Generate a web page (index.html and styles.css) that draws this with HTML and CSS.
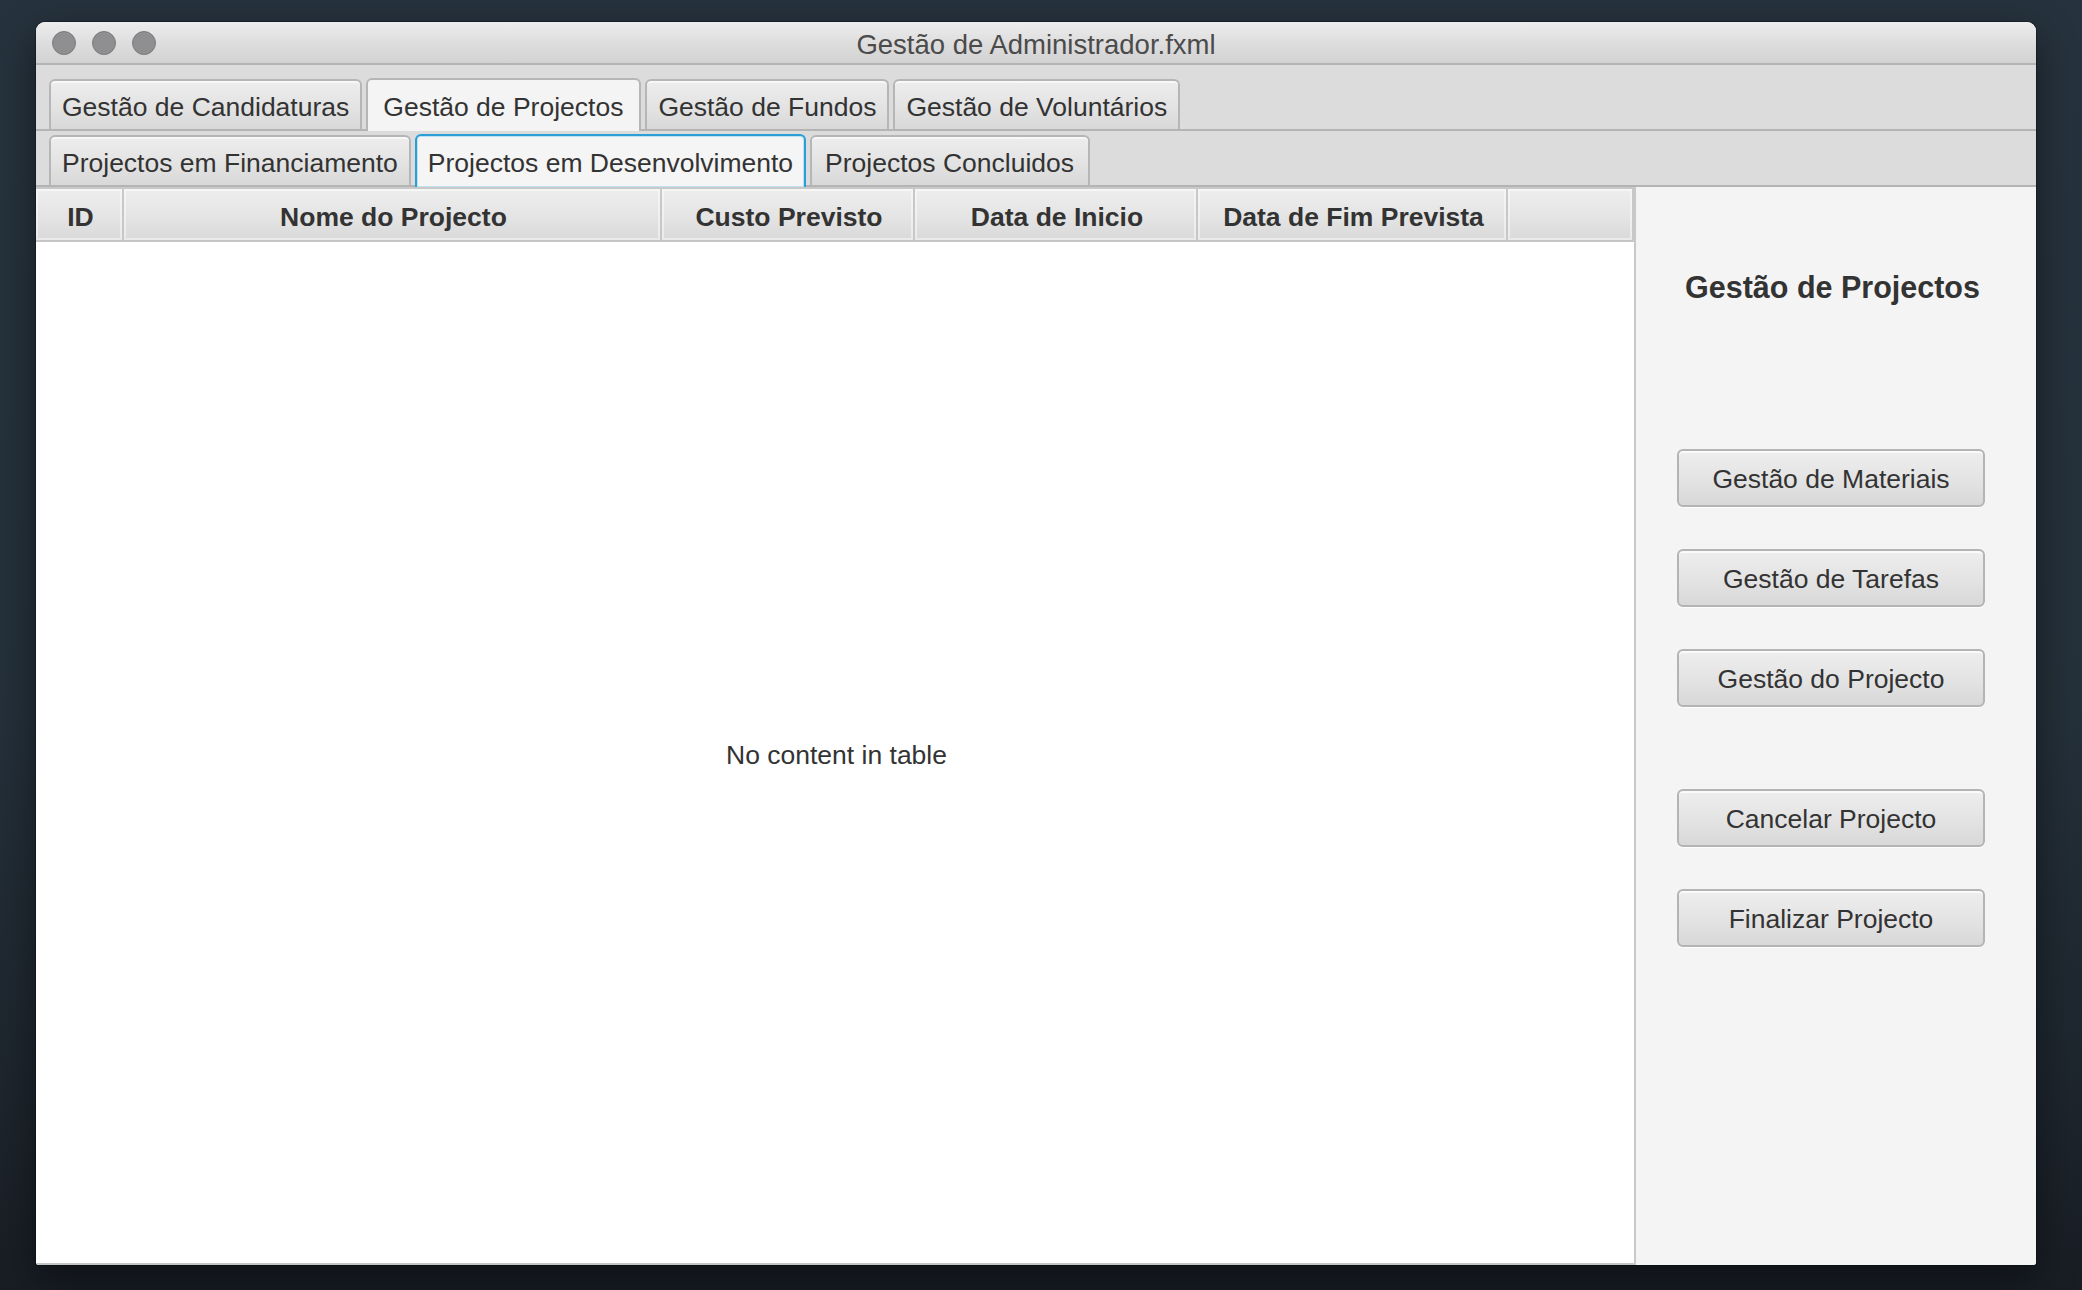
FILE: index.html
```html
<!DOCTYPE html>
<html lang="pt">
<head>
<meta charset="utf-8">
<title>Gestão de Administrador.fxml</title>
<link rel="stylesheet" href="styles.css">
</head>
<body>
<div class="desktop">
  <div class="window">
    <div class="titlebar">
      <div class="lights">
        <span class="light"></span>
        <span class="light"></span>
        <span class="light"></span>
      </div>
      <div class="title">Gestão de Administrador.fxml</div>
      <div class="spacer"></div>
    </div>
    <div class="tabrow tabrow-outer">
      <div class="tab">Gestão de Candidaturas</div>
      <div class="tab selected wide">Gestão de Projectos</div>
      <div class="tab">Gestão de Fundos</div>
      <div class="tab">Gestão de Voluntários</div>
    </div>
    <div class="tabrow tabrow-inner">
      <div class="tab">Projectos em Financiamento</div>
      <div class="tab selected focused">Projectos em Desenvolvimento</div>
      <div class="tab roomy">Projectos Concluidos</div>
    </div>
    <div class="main">
      <div class="table">
        <div class="thead">
          <div class="th">ID</div>
          <div class="th">Nome do Projecto</div>
          <div class="th">Custo Previsto</div>
          <div class="th">Data de Inicio</div>
          <div class="th">Data de Fim Prevista</div>
          <div class="th"></div>
        </div>
        <div class="tbody">
          <span class="empty">No content in table</span>
        </div>
      </div>
      <aside class="panel">
        <h2 class="panel-title">Gestão de Projectos</h2>
        <div class="btn-group group-top">
          <button class="btn">Gestão de Materiais</button>
          <button class="btn">Gestão de Tarefas</button>
          <button class="btn">Gestão do Projecto</button>
        </div>
        <div class="btn-group group-bottom">
          <button class="btn">Cancelar Projecto</button>
          <button class="btn">Finalizar Projecto</button>
        </div>
      </aside>
    </div>
  </div>
</div>
</body>
</html>
```
FILE: styles.css
```css
* {
  box-sizing: border-box;
}

html, body {
  margin: 0;
  padding: 0;
}

body {
  width: 2082px;
  height: 1290px;
  overflow: hidden;
  font-family: "Liberation Sans", Arial, sans-serif;
  color: #333333;
  background: linear-gradient(180deg, #26323d 0%, #24303a 55%, #1d252d 85%, #181d24 100%);
}

.desktop {
  width: 2082px;
  height: 1290px;
  padding: 22px 0 0 36px;
}

.window {
  width: 2000px;
  height: 1243px;
  display: flex;
  flex-direction: column;
  border-radius: 9px 9px 3px 3px;
  overflow: hidden;
  background: #f4f4f4;
  box-shadow: 0 14px 40px rgba(0, 0, 0, 0.45), 0 0 0 1px rgba(0, 0, 0, 0.25);
}

/* Title bar */
.titlebar {
  height: 43px;
  flex: none;
  display: grid;
  grid-template-columns: 1fr auto 1fr;
  align-items: center;
  background: linear-gradient(180deg, #ededed 0%, #dedede 50%, #d2d2d2 100%);
  border-bottom: 2px solid #b3b3b3;
}

.lights {
  display: flex;
  gap: 16px;
  padding-left: 16px;
  padding-top: 1px;
}

.light {
  width: 24px;
  height: 24px;
  border-radius: 50%;
  background: #8f8f91;
  border: 1px solid #7b7b7d;
}

.title {
  font-size: 27.5px;
  line-height: 1;
  color: #4b4b4b;
  padding-top: 4px;
}

/* Tab rows */
.tabrow {
  flex: none;
  display: flex;
  align-items: flex-end;
  gap: 4px;
  padding-left: 13px;
  background: #dcdcdc;
  border-bottom: 2px solid #b4b4b4;
}

.tabrow-outer {
  height: 66px;
  padding-top: 14px;
}

.tabrow-inner {
  height: 56px;
  padding-top: 4px;
}

.tab {
  height: 50px;
  display: flex;
  align-items: center;
  padding: 4px 11px 0;
  font-size: 26.5px;
  line-height: 1;
  color: #333333;
  white-space: nowrap;
  border: 2px solid #b6b6b6;
  border-bottom: none;
  border-radius: 6px 6px 0 0;
  background: linear-gradient(180deg, #ededed 0%, #e2e2e2 60%, #d8d8d8 100%);
  box-shadow: inset 0 2px 0 rgba(255, 255, 255, 0.6);
}

.tab.selected {
  height: 53px;
  margin-bottom: -2px;
  padding-top: 3px;
  background: #f4f4f4;
  box-shadow: none;
}

.tab.wide {
  padding-left: 15px;
  padding-right: 16px;
}

.tab.roomy {
  padding-left: 13px;
  padding-right: 14px;
}

.tab.focused {
  border-color: #2b9fd5;
  background: #f5f5f5;
  box-shadow: inset 0 0 0 1px #bfe2f3;
}

/* Main area */
.main {
  flex: 1;
  display: flex;
  min-height: 0;
}

.table {
  flex: 1;
  display: flex;
  flex-direction: column;
  background: #ffffff;
  border-bottom: 2px solid #c4c4c4;
}

.thead {
  flex: none;
  height: 55px;
  display: grid;
  grid-template-columns: 88px 538px 253px 283px 310px 126px;
  padding-top: 2px;
  background: #c8c8c8;
  border-bottom: 2px solid #c6c6c6;
}

.th {
  display: flex;
  align-items: center;
  justify-content: center;
  padding-top: 5px;
  padding-left: 3px;
  font-size: 26.5px;
  font-weight: bold;
  line-height: 1;
  color: #333333;
  white-space: nowrap;
  border-right: 2px solid #c8c8c8;
  background: linear-gradient(180deg, #eeeeee 0%, #e4e4e4 55%, #d9d9d9 100%);
  box-shadow: inset 0 0 0 2px rgba(255, 255, 255, 0.45);
}

.tbody {
  flex: 1;
  display: flex;
  align-items: center;
  justify-content: center;
  padding-top: 6px;
  padding-left: 3px;
}

.empty {
  font-size: 26.5px;
  line-height: 1;
  color: #333333;
}

/* Right panel */
.panel {
  flex: none;
  width: 402px;
  display: flex;
  flex-direction: column;
  padding-left: 41px;
  background: #f4f4f4;
  border-left: 2px solid #c8c8c8;
}

.panel-title {
  width: 308px;
  margin: 82px 0 0;
  padding-left: 3px;
  font-size: 30.5px;
  line-height: 36px;
  font-weight: bold;
  text-align: center;
  color: #333333;
}

.btn-group {
  display: flex;
  flex-direction: column;
  gap: 42px;
  width: 308px;
}

.group-top {
  margin-top: 144px;
}

.group-bottom {
  margin-top: 82px;
}

.btn {
  height: 58px;
  width: 308px;
  padding: 3px 0 0;
  font-family: "Liberation Sans", Arial, sans-serif;
  font-size: 26.5px;
  line-height: 1;
  color: #333333;
  border: 2px solid #b4b4b4;
  border-radius: 6px;
  background: linear-gradient(180deg, #eeeeee 0%, #e3e3e3 55%, #d8d8d8 100%);
  box-shadow: inset 0 2px 0 rgba(255, 255, 255, 0.7), 0 1px 0 rgba(255, 255, 255, 0.8);
}
```
